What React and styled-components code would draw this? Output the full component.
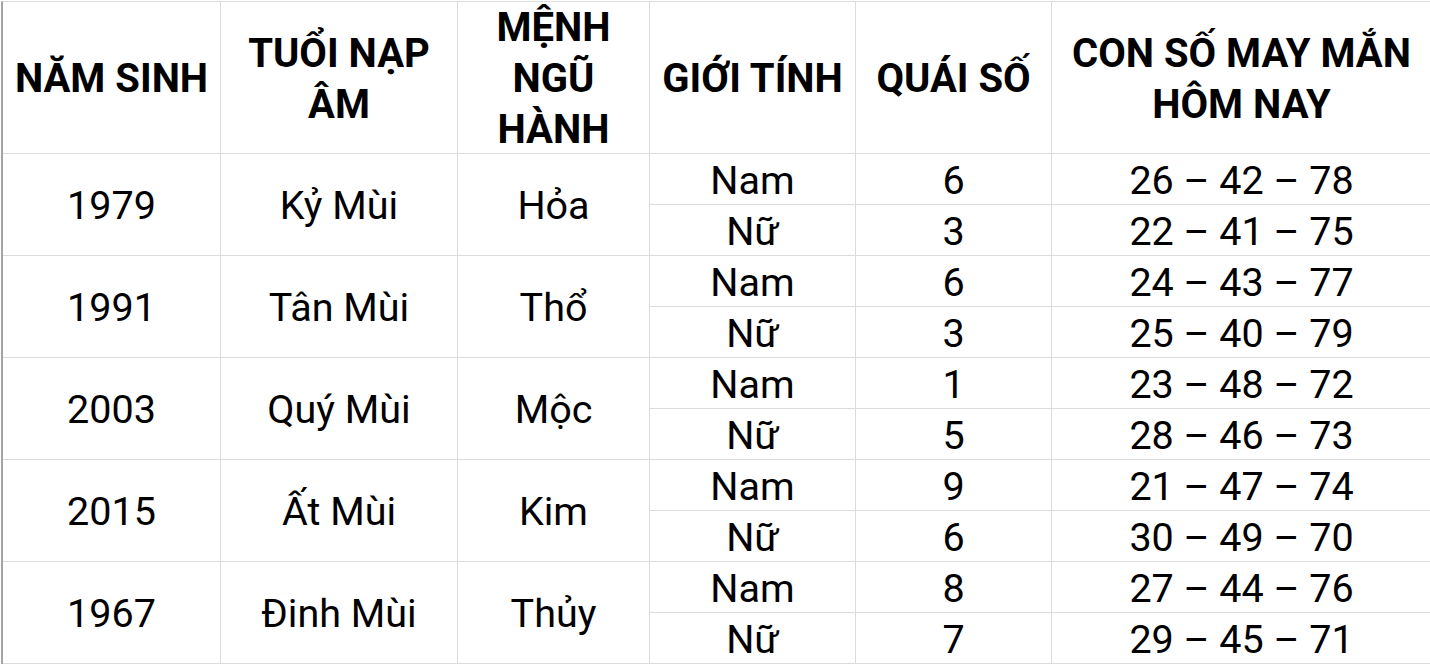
import React from "react";
import styled, { createGlobalStyle } from "styled-components";

const Global = createGlobalStyle`
  html, body { margin: 0; padding: 0; background: #fff; }
  body { font-family: Roboto, "Noto Sans", sans-serif; color: #000; overflow: hidden; }
`;

const Page = styled.div`
  padding-top: 1px;
  padding-left: 1px;
  width: 1430px;
  height: 664px;
  box-sizing: border-box;
`;

const Grid = styled.div`
  display: grid;
  grid-template-columns: 218px 237px 192px 206px 196px 379px;
  grid-template-rows: 152px repeat(10, 51px);
  border-left: 2px solid #a3a3a3;
  border-top: 1px solid #dcdcdc;
`;

const Cell = styled.div`
  display: flex;
  align-items: center;
  justify-content: center;
  text-align: center;
  box-sizing: border-box;
  border-right: ${(p) => (p.$last ? "none" : "1px solid #dcdcdc")};
  border-bottom: 1px solid #dcdcdc;
  grid-row: ${(p) => (p.$span ? `span ${p.$span}` : "auto")};
  font-size: 39.5px;
  line-height: 50px;
  padding-top: 3px;
`;

const Head = styled(Cell)`
  font-weight: 700;
  font-size: 40px;
  line-height: 51px;
  padding-top: 2px;
`;

const data = [
  ["1979", "Kỷ Mùi", "Hỏa", [["Nam", "6", "26 – 42 – 78"], ["Nữ", "3", "22 – 41 – 75"]]],
  ["1991", "Tân Mùi", "Thổ", [["Nam", "6", "24 – 43 – 77"], ["Nữ", "3", "25 – 40 – 79"]]],
  ["2003", "Quý Mùi", "Mộc", [["Nam", "1", "23 – 48 – 72"], ["Nữ", "5", "28 – 46 – 73"]]],
  ["2015", "Ất Mùi", "Kim", [["Nam", "9", "21 – 47 – 74"], ["Nữ", "6", "30 – 49 – 70"]]],
  ["1967", "Đinh Mùi", "Thủy", [["Nam", "8", "27 – 44 – 76"], ["Nữ", "7", "29 – 45 – 71"]]],
];

export default function App() {
  return (
    <Page>
      <Global />
      <Grid>
        <Head>NĂM SINH</Head>
        <Head>TUỔI NẠP<br />ÂM</Head>
        <Head>MỆNH<br />NGŨ<br />HÀNH</Head>
        <Head>GIỚI TÍNH</Head>
        <Head>QUÁI SỐ</Head>
        <Head $last>CON SỐ MAY MẮN<br />HÔM NAY</Head>
        {data.map(([year, tuoi, menh, rows]) => (
          <React.Fragment key={year}>
            <Cell $span={2} style={{ gridColumn: 1 }}>{year}</Cell>
            <Cell $span={2} style={{ gridColumn: 2 }}>{tuoi}</Cell>
            <Cell $span={2} style={{ gridColumn: 3 }}>{menh}</Cell>
            {rows.map(([g, q, n], i) => (
              <React.Fragment key={i}>
                <Cell style={{ gridColumn: 4 }}>{g}</Cell>
                <Cell style={{ gridColumn: 5 }}>{q}</Cell>
                <Cell $last style={{ gridColumn: 6 }}>{n}</Cell>
              </React.Fragment>
            ))}
          </React.Fragment>
        ))}
      </Grid>
    </Page>
  );
}
